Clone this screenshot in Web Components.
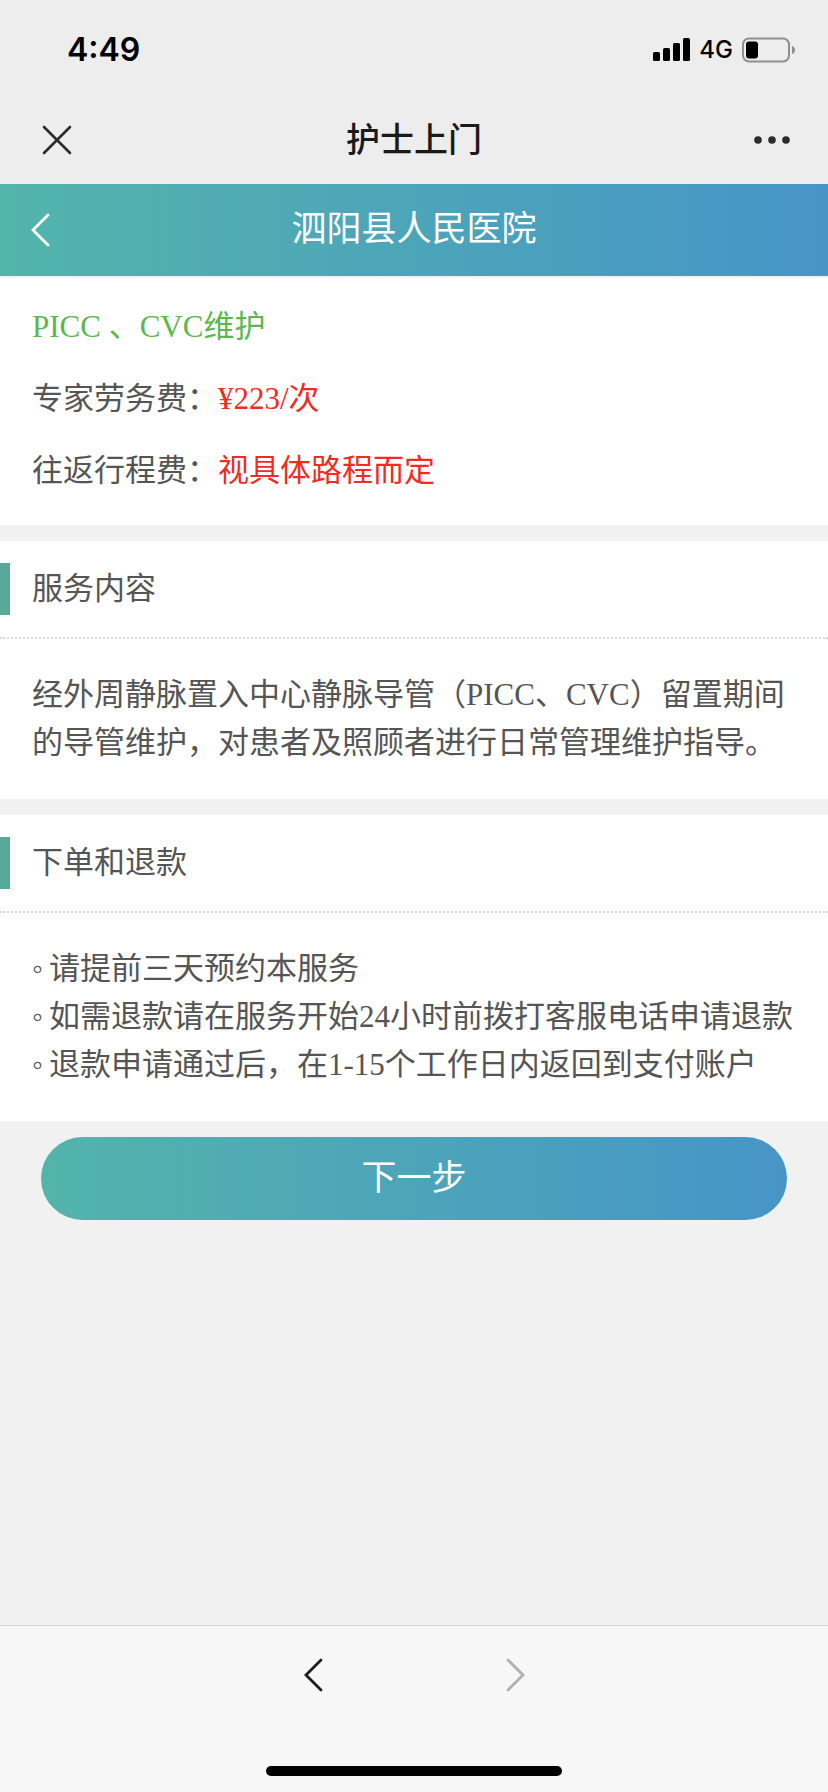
<!DOCTYPE html>
<html lang="zh-CN">
<head>
<meta charset="UTF-8">
<meta name="viewport" content="width=device-width, initial-scale=1.0">
<title>护士上门</title>
<style>
    body {
        margin: 0;
        background: #f1f1f1;
        color: #555;
        font-family: "Liberation Serif", "Noto Sans CJK SC", serif;
        font-size: 31px;
        line-height: 48px;
        --ui-font: Inter, "Noto Sans CJK SC", sans-serif;
        --brand: linear-gradient(to right, #53b4ab, #4695c7);
    }
</style>
</head>
<body>
<app-page>
    <status-bar slot="top" time="4:49" network="4G"></status-bar>
    <web-nav slot="top">护士上门</web-nav>
    <hospital-header slot="top">泗阳县人民医院</hospital-header>

    <price-card>
        <span slot="name">PICC 、CVC维护</span>
        <span slot="fee">¥223/次</span>
        <span slot="travel">视具体路程而定</span>
    </price-card>
    <info-section>
        <span slot="title">服务内容</span>
        经外周静脉置入中心静脉导管（PICC、CVC）留置期间的导管维护，对患者及照顾者进行日常管理维护指导。
    </info-section>
    <info-section>
        <span slot="title">下单和退款</span>
        <note-item>请提前三天预约本服务</note-item>
        <note-item>如需退款请在服务开始24小时前拨打客服电话申请退款</note-item>
        <note-item>退款申请通过后，在1-15个工作日内返回到支付账户</note-item>
    </info-section>
    <next-button>下一步</next-button>

    <browser-bar slot="bottom"></browser-bar>
</app-page>

<script>
class AppPage extends HTMLElement {
    constructor() {
        super();
        this.attachShadow({ mode: "open" }).innerHTML = `
        <style>
        :host {
            display: flex;
            flex-direction: column;
            min-height: 100vh;
        }

        main {
            flex: 1;
            display: flex;
            flex-direction: column;
            gap: 16px;
            padding-top: 2px;
        }
        </style>
        <slot name="top"></slot>
        <main><slot></slot></main>
        <slot name="bottom"></slot>
        `;
    }
}

class StatusBar extends HTMLElement {
    constructor() {
        super();
        this.attachShadow({ mode: "open" }).innerHTML = `
        <style>
        :host {
            display: flex;
            align-items: center;
            justify-content: space-between;
            height: 100px;
            padding: 0 33px 0 67px;
            background: #ededed;
            color: #000;
            font-family: var(--ui-font);
        }

        .time {
            font-size: 32px;
            font-weight: 600;
        }

        .right {
            display: flex;
            align-items: center;
            gap: 8px;
        }

        .network {
            font-size: 24px;
            font-weight: 500;
        }

        svg {
            display: block;
        }
        </style>
        <span class="time">${this.getAttribute("time")}</span>
        <div class="right">
            <svg width="38" height="24" viewBox="0 0 38 24" aria-hidden="true">
                <rect x="0" y="14" width="7" height="9" rx="1.5"/>
                <rect x="10" y="10" width="7" height="13" rx="1.5"/>
                <rect x="20" y="5" width="7" height="18" rx="1.5"/>
                <rect x="30" y="0" width="7" height="23" rx="1.5"/>
            </svg>
            <span class="network">${this.getAttribute("network")}</span>
            <svg width="54" height="26" viewBox="0 0 54 26" aria-hidden="true">
                <rect x="2" y="1.5" width="46" height="23" rx="6" fill="none" stroke="#8f8f8f" stroke-width="2"/>
                <rect x="5" y="4.5" width="12" height="17" rx="3"/>
                <path d="M51 9c4 1 4 7 0 8z" fill="#8f8f8f"/>
            </svg>
        </div>
        `;
    }
}

class WebNav extends HTMLElement {
    constructor() {
        super();
        this.attachShadow({ mode: "open" }).innerHTML = `
        <style>
        :host {
            display: grid;
            grid-template-columns: 1fr auto 1fr;
            align-items: center;
            height: 80px;
            padding: 0 32px 4px;
            background: #ededed;
            color: #1a1a1a;
            font-family: var(--ui-font);
        }

        h1 {
            margin: 0;
            font-size: 34px;
            font-weight: 500;
        }

        button {
            padding: 0;
            border: none;
            background: none;
            cursor: pointer;
        }

        .more {
            justify-self: end;
        }

        .close {
            justify-self: start;
        }

        svg {
            display: block;
        }
        </style>
        <button class="close" aria-label="关闭">
            <svg width="48" height="48" viewBox="0 0 48 48">
                <path d="M12 11l26 26M38 11l-26 26" fill="none" stroke="#2b2b2b" stroke-width="2.6" stroke-linecap="round"/>
            </svg>
        </button>
        <h1><slot></slot></h1>
        <button class="more" aria-label="更多">
            <svg width="48" height="48" viewBox="0 0 48 48" fill="#2b2b2b">
                <circle cx="10" cy="24" r="3.8"/>
                <circle cx="24" cy="24" r="3.8"/>
                <circle cx="38" cy="24" r="3.8"/>
            </svg>
        </button>
        `;
    }
}

class HospitalHeader extends HTMLElement {
    constructor() {
        super();
        this.attachShadow({ mode: "open" }).innerHTML = `
        <style>
        :host {
            display: grid;
            grid-template-columns: 1fr auto 1fr;
            align-items: center;
            height: 92px;
            padding: 0 16px;
            background: var(--brand);
            color: #fff;
        }

        h2 {
            margin: 0;
            font-size: 35px;
            font-weight: 400;
        }

        button {
            justify-self: start;
            padding: 0;
            border: none;
            background: none;
            cursor: pointer;
        }

        svg {
            display: block;
        }
        </style>
        <button aria-label="返回">
            <svg width="48" height="48" viewBox="0 0 48 48">
                <path d="M32 9L17 24l15 15" fill="none" stroke="#fff" stroke-width="2.8" stroke-linecap="round"/>
            </svg>
        </button>
        <h2><slot></slot></h2>
        `;
    }
}

class PriceCard extends HTMLElement {
    constructor() {
        super();
        this.attachShadow({ mode: "open" }).innerHTML = `
        <style>
        :host {
            display: grid;
            gap: 24px;
            padding: 25px 32px 30px;
            background: #fff;
        }

        p {
            margin: 0;
        }

        .name {
            color: #5cb74c;
        }

        .value {
            color: #f12b1f;
        }
        </style>
        <p class="name"><slot name="name"></slot></p>
        <p>专家劳务费：<span class="value"><slot name="fee"></slot></span></p>
        <p>往返行程费：<span class="value"><slot name="travel"></slot></span></p>
        `;
    }
}

class InfoSection extends HTMLElement {
    constructor() {
        super();
        this.attachShadow({ mode: "open" }).innerHTML = `
        <style>
        :host {
            display: block;
            background: #fff;
        }

        header {
            display: flex;
            align-items: center;
            gap: 22px;
            height: 96px;
            border-bottom: 2px dotted #d9d9d9;
        }

        header::before {
            content: "";
            width: 10px;
            height: 52px;
            background: #57a99b;
        }

        h3 {
            margin: 0;
            font-size: 31px;
            font-weight: 400;
        }

        .content {
            padding: 32px;
        }
        </style>
        <header><h3><slot name="title"></slot></h3></header>
        <div class="content"><slot></slot></div>
        `;
    }
}

class NoteItem extends HTMLElement {
    constructor() {
        super();
        this.attachShadow({ mode: "open" }).innerHTML = `
        <style>
        :host {
            display: flex;
        }

        .dot {
            width: 17px;
            flex: none;
        }
        </style>
        <span class="dot">◦</span>
        <span><slot></slot></span>
        `;
    }
}

class NextButton extends HTMLElement {
    constructor() {
        super();
        this.attachShadow({ mode: "open" }).innerHTML = `
        <style>
        :host {
            display: block;
            padding: 0 41px;
        }

        button {
            width: 100%;
            height: 83px;
            border: none;
            border-radius: 42px;
            background: var(--brand);
            color: #fff;
            font-family: inherit;
            font-size: 35px;
            font-weight: 400;
            line-height: inherit;
            cursor: pointer;
        }
        </style>
        <button><slot></slot></button>
        `;
    }
}

class BrowserBar extends HTMLElement {
    constructor() {
        super();
        this.attachShadow({ mode: "open" }).innerHTML = `
        <style>
        :host {
            display: flex;
            flex-direction: column;
            align-items: center;
            gap: 42px;
            padding-bottom: 16px;
            border-top: 1px solid #d5d5d5;
            background: #f7f7f7;
        }

        nav {
            display: flex;
        }

        button {
            display: grid;
            place-items: center;
            width: 202px;
            height: 98px;
            padding: 0;
            border: none;
            background: none;
            color: #1a1a1a;
            cursor: pointer;
        }

        button:disabled {
            color: #b0b0b0;
        }

        .home {
            width: 296px;
            height: 10px;
            border-radius: 5px;
            background: #000;
        }
        </style>
        <nav>
            <button aria-label="后退">
                <svg width="48" height="48" viewBox="0 0 48 48">
                    <path d="M32 9L17 24l15 15" fill="none" stroke="currentColor" stroke-width="2.8" stroke-linecap="round"/>
                </svg>
            </button>
            <button aria-label="前进" disabled>
                <svg width="48" height="48" viewBox="0 0 48 48">
                    <path d="M17 9l15 15-15 15" fill="none" stroke="currentColor" stroke-width="2.8" stroke-linecap="round"/>
                </svg>
            </button>
        </nav>
        <div class="home"></div>
        `;
    }
}

customElements.define("app-page", AppPage);
customElements.define("status-bar", StatusBar);
customElements.define("web-nav", WebNav);
customElements.define("hospital-header", HospitalHeader);
customElements.define("price-card", PriceCard);
customElements.define("info-section", InfoSection);
customElements.define("note-item", NoteItem);
customElements.define("next-button", NextButton);
customElements.define("browser-bar", BrowserBar);
</script>
</body>
</html>
